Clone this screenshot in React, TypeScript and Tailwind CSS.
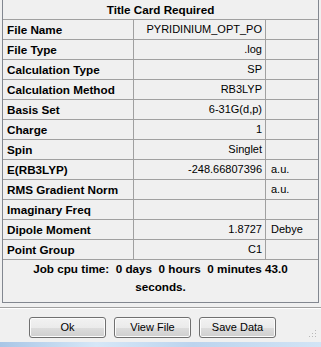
import React from 'react';

const rows: [string, string, string][] = [
  ['File Name', 'PYRIDINIUM_OPT_PO', ''],
  ['File Type', '.log', ''],
  ['Calculation Type', 'SP', ''],
  ['Calculation Method', 'RB3LYP', ''],
  ['Basis Set', '6-31G(d,p)', ''],
  ['Charge', '1', ''],
  ['Spin', 'Singlet', ''],
  ['E(RB3LYP)', '-248.66807396', 'a.u.'],
  ['RMS Gradient Norm', '', 'a.u.'],
  ['Imaginary Freq', '', ''],
  ['Dipole Moment', '1.8727', 'Debye'],
  ['Point Group', 'C1', ''],
];

function WinButton({ label }: { label: string }) {
  return (
    <button className="w-[77px] h-[21px] rounded-[3px] border border-[#707070] bg-[linear-gradient(#f2f2f2_0%,#ebebeb_50%,#dddddd_50%,#cfcfcf_100%)] text-[11px] leading-[19px] text-black shadow-[inset_0_0_0_1px_#fcfcfc]">
      {label}
    </button>
  );
}

export default function App() {
  return (
    <div className="w-[321px] h-[347px] bg-[#f0f0f0] flex flex-col overflow-hidden font-['Liberation_Sans',Arial,sans-serif] text-black">
      {/* Title card grid */}
      <div className="ml-[2px] w-[317px] border-x border-b border-[#828790]">
        <div className="h-[20px] border-b border-[#a0a0a0] flex items-center justify-center text-[11.7px] font-bold">
          Title Card Required
        </div>
        {rows.map(([label, value, unit]) => (
          <div key={label} className="h-[20px] border-b border-[#a0a0a0] grid grid-cols-[131px_132px_1fr]">
            <div className="border-r border-[#a0a0a0] pl-[4px] flex items-center text-[11.7px] font-bold whitespace-nowrap">
              {label}
            </div>
            <div className="border-r border-[#a0a0a0] pr-[3px] flex items-center justify-end text-[11px] whitespace-nowrap">
              {value}
            </div>
            <div className="pl-[5px] flex items-center text-[11px]">{unit}</div>
          </div>
        ))}
        <div className="h-[42px] text-center text-[11.7px] font-bold leading-[18px] whitespace-pre">
          {'Job cpu time:  0 days  0 hours  0 minutes 43.0\nseconds.'}
        </div>
      </div>

      {/* etched separator */}
      <div className="mt-[4px] border-t border-[#a0a0a0] border-b border-b-white" />

      {/* buttons */}
      <div className="mt-[8px] flex items-center pl-[29px] gap-[8px]">
        <WinButton label="Ok" />
        <WinButton label="View File" />
        <WinButton label="Save Data" />
        <svg className="ml-auto mr-[4px] mt-[12px]" width="8" height="8" viewBox="0 0 8 8">
          <rect x="6" y="0" width="1" height="1" fill="#b8b8b8" />
          <rect x="3" y="3" width="1" height="1" fill="#b8b8b8" />
          <rect x="6" y="3" width="1" height="1" fill="#b8b8b8" />
          <rect x="0" y="6" width="1" height="1" fill="#b8b8b8" />
          <rect x="3" y="6" width="1" height="1" fill="#b8b8b8" />
          <rect x="6" y="6" width="1" height="1" fill="#b8b8b8" />
        </svg>
      </div>

      {/* window frame edge */}
      <div className="mt-auto h-[5px] bg-[linear-gradient(90deg,#a9c6e6,#d6e7f7_30%,#bcd4ee_60%,#d2e4f5)]" />
    </div>
  );
}
